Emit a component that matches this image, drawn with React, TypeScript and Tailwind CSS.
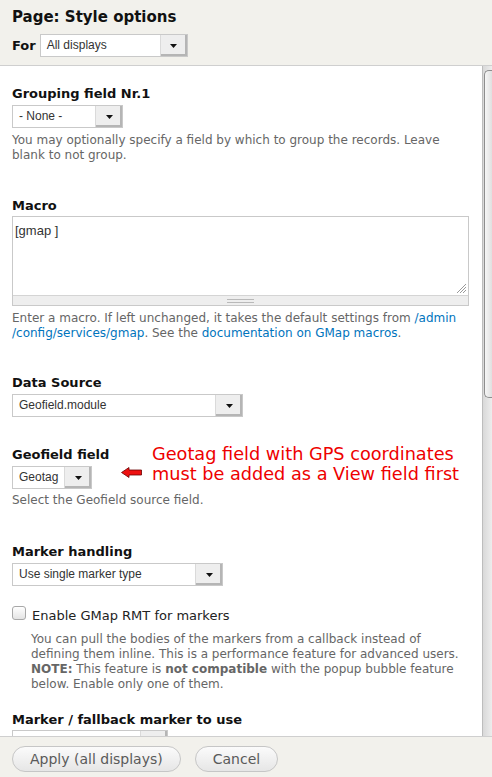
import type { ReactNode } from 'react'

function Select({ value, className }: { value?: string; className: string }) {
  return (
    <div className={`flex h-[23px] shrink-0 border border-[#c9c9c9] bg-white ${className}`}>
      <span className="min-w-0 flex-1 truncate pl-[6px] font-['Liberation_Sans',Arial,sans-serif] text-[12px] leading-[21px] text-[#333]">
        {value}
      </span>
      <span className="flex w-[27px] items-center justify-center border-l border-[#dadada] bg-[#eeeeee] shadow-[inset_-2px_-2px_0_#b5b5b5]">
        <svg width="7" height="4" viewBox="0 0 7 4">
          <path d="M0 0h7L3.5 4z" fill="#111" />
        </svg>
      </span>
    </div>
  )
}

function Label({ children }: { children: ReactNode }) {
  return <div className="mb-[3px] text-[13px] leading-[16px] font-bold text-[#111]">{children}</div>
}

function Help({ children, className = '' }: { children: ReactNode; className?: string }) {
  return <p className={`text-[12px] leading-[15px] text-[#666] ${className}`}>{children}</p>
}

function Button({ children }: { children: ReactNode }) {
  return (
    <button className="h-[26px] rounded-full border border-[#c6c6c6] bg-linear-to-b from-[#fbfbfb] to-[#e6e6e6] px-[17px] text-[14px] leading-[24px] text-[#5a5a5a]">
      {children}
    </button>
  )
}

export default function App() {
  return (
    <div className="flex h-[777px] w-full flex-col overflow-hidden bg-white font-['DejaVu_Sans',sans-serif]">
      <header className="h-[66px] shrink-0 border-b border-[#cfcfcf] bg-[#f2f1ec] px-[12px] pt-[7px]">
        <h1 className="text-[15px] leading-[20px] font-bold text-[#111]">Page: Style options</h1>
        <div className="mt-[7px] flex items-center">
          <span className="mr-[4px] text-[13px] leading-[16px] font-bold text-[#111]">For</span>
          <Select value="All displays" className="w-[148px]" />
        </div>
      </header>

      <div className="flex min-h-0 flex-1">
        <main className="min-w-0 flex-1 overflow-hidden pr-[13px] pl-[12px]">
          {/* grouping */}
          <div className="mt-[20px]">
            <Label>Grouping field Nr.1</Label>
            <Select value="- None -" className="w-[111px]" />
            <Help className="mt-[5px]">
              You may optionally specify a field by which to group the records. Leave blank to not group.
            </Help>
          </div>

          {/* macro */}
          <div className="mt-[35px]">
            <div className="mb-[2px] text-[13px] leading-[16px] font-bold text-[#111]">Macro</div>
            <div className="border border-[#c9c9c9]">
              <div className="relative h-[78px] bg-white pt-[6px] pl-[2px] font-['Liberation_Sans',Arial,sans-serif] text-[13px] leading-[16px] text-[#333]">
                [gmap ]
                <svg className="absolute right-[1px] bottom-[1px]" width="11" height="11" viewBox="0 0 11 11">
                  <path d="M10 1L1 10M10 4L4 10M10 7L7 10" stroke="#9a9a9a" strokeWidth="1" />
                </svg>
              </div>
              <div className="flex h-[10px] items-center justify-center border-t border-[#d4d4d4] bg-[#eeeeee]">
                <div className="h-[4px] w-[27px] border-y border-[#b9b9b9]" />
              </div>
            </div>
            <Help className="mt-[5px]">
              Enter a macro. If left unchanged, it takes the default settings from{' '}
              <a className="text-[#0074bd]">
                /admin
                <wbr />
                /config/services/gmap
              </a>
              . See the <a className="text-[#0074bd]">documentation on GMap macros</a>.
            </Help>
          </div>

          {/* data source */}
          <div className="mt-[34px]">
            <Label>Data Source</Label>
            <Select value="Geofield.module" className="w-[231px]" />
          </div>

          {/* geofield field with note */}
          <div className="mt-[30px]">
            <div className="flex items-start">
              <div className="w-[109px] shrink-0">
                <Label>Geofield field</Label>
                <Select value="Geotag" className="w-[80px]" />
              </div>
              <svg className="mt-[20px] shrink-0" width="21" height="11" viewBox="0 0 21 11">
                <path d="M0.5 5.5L8 0.5V3H20.5V8H8V10.5Z" fill="#ee1111" stroke="#6a0000" strokeWidth="0.8" />
              </svg>
              <p className="-mt-[3px] ml-[10px] text-[17.7px] leading-[20px] whitespace-nowrap text-[#ee0000]">
                Geotag field with GPS coordinates
                <br />
                must be added as a View field first
              </p>
            </div>
            <Help className="mt-[4px]">Select the Geofield source field.</Help>
          </div>

          {/* markers */}
          <div className="mt-[36px]">
            <Label>Marker handling</Label>
            <Select value="Use single marker type" className="w-[211px]" />
          </div>

          <div className="mt-[20px] flex items-start">
            <span className="h-[14px] w-[14px] shrink-0 rounded-[3px] border border-[#a8a8a8] bg-linear-to-b from-white to-[#e4e4e4]" />
            <span className="mt-[2px] ml-[6px] text-[13px] leading-[16px] text-[#222]">Enable GMap RMT for markers</span>
          </div>
          <Help className="mt-[8px] ml-[19px]">
            You can pull the bodies of the markers from a callback instead of defining them inline. This is a
            performance feature for advanced users. <strong className="font-bold">NOTE:</strong> This feature is{' '}
            <strong className="font-bold">not compatible</strong> with the popup bubble feature below. Enable only one
            of them.
          </Help>

          <div className="mt-[20px]">
            <div className="mb-[2px] text-[13px] leading-[16px] font-bold text-[#111]">Marker / fallback marker to use</div>
            <Select className="w-[156px]" />
          </div>
        </main>

        {/* scrollbar */}
        <div className="w-[10px] shrink-0 border-l border-[#bdbdbd] bg-linear-to-r from-[#d9d9d9] to-[#ededed] pt-[4px] pl-[1px]">
          <div className="h-[328px] rounded-l-[5px] border border-r-0 border-[#8e8e8e] bg-linear-to-r from-[#f6f6f6] to-[#e0e0e0]" />
        </div>
      </div>

      <footer className="flex h-[41px] shrink-0 gap-[14px] border-t border-[#cfcfcf] bg-[#f2f1ec] px-[12px] pt-[9px]">
        <Button>Apply (all displays)</Button>
        <Button>Cancel</Button>
      </footer>
    </div>
  )
}
